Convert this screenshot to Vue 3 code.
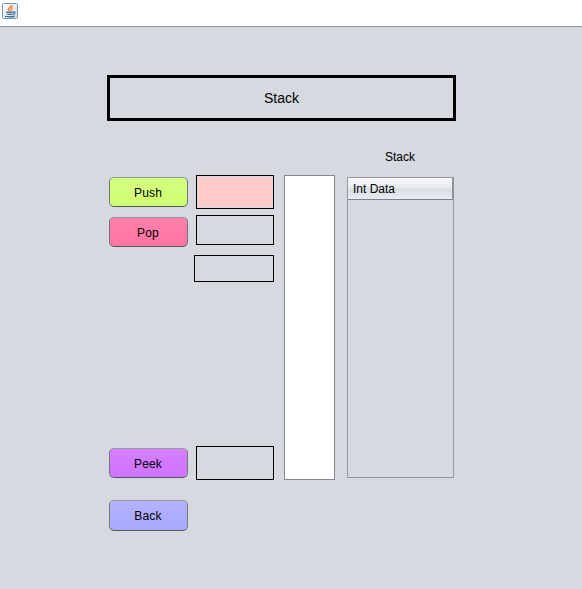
<script setup>
</script>

<template>
  <div class="window">
    <header class="titlebar">
      <svg class="app-icon" width="16" height="16" viewBox="0 0 16 16">
        <defs>
          <linearGradient id="tile" x1="0" y1="0" x2="1" y2="1">
            <stop offset="0" stop-color="#ffffff" />
            <stop offset="1" stop-color="#d3dde6" />
          </linearGradient>
        </defs>
        <rect x=".5" y=".5" width="15" height="15" rx="1" fill="url(#tile)" stroke="#7896ab" />
        <path d="M9.6 2C9.8 4 6 4.8 6.5 6.6C6.8 7.4 7.8 7.6 7.9 8.6" fill="none" stroke="#ee8536" stroke-width="1.8" />
        <path d="M11 4.6C9.2 5.3 8.6 6 9.2 6.8C9.6 7.4 9.4 7.8 8.8 8.4" fill="none" stroke="#ee8536" stroke-width="1.2" />
        <path d="M4 9.4H11.2M5 11.4H10.6M3 13.4Q7.5 14.2 12.8 13.2" fill="none" stroke="#3f74a0" stroke-width="1.4" />
        <path d="M11 8.9C14 8.4 13.5 11 11 11.4" fill="none" stroke="#3f74a0" stroke-width="1.2" />
      </svg>
    </header>
    <main class="content">
      <h1 class="heading">Stack</h1>
      <div class="panel">
        <div class="buttons">
          <button class="btn push">Push</button>
          <button class="btn pop">Pop</button>
          <button class="btn peek">Peek</button>
          <button class="btn back">Back</button>
        </div>
        <div class="fields">
          <div class="field input"></div>
          <div class="field popped"></div>
          <div class="field status"></div>
          <div class="field peeked"></div>
        </div>
        <div class="list"></div>
        <section class="table-area">
          <div class="label">Stack</div>
          <div class="table">
            <div class="table-head">Int Data</div>
          </div>
        </section>
      </div>
    </main>
  </div>
</template>

<style>
body {
  background: #d6d9df;
}
</style>

<style scoped>
.window {
  box-sizing: border-box;
  height: 589px;
  background: #d6d9df;
  color: #000;
  font: 12px/14px "Liberation Sans", Arial, sans-serif;
}
.window * {
  box-sizing: border-box;
}
.titlebar {
  height: 27px;
  padding: 3px 2px;
  background: #fff;
  border-bottom: 1px solid #8f939e;
}
.app-icon {
  display: block;
}
.content {
  padding: 48px 0 0 107px;
}
.heading {
  width: 349px;
  height: 46px;
  margin: 0;
  border: 3px solid #000;
  font-size: 14px;
  font-weight: normal;
  line-height: 40px;
  text-align: center;
}
.panel {
  display: flex;
  align-items: flex-start;
  padding-top: 28px;
}
.buttons {
  display: flex;
  flex-direction: column;
  width: 79px;
  margin: 28px 6px 0 2px;
}
.btn {
  height: 30px;
  padding: 2px 1px 0 0;
  border: 1px solid;
  border-color: #93979f #72757d #53565c;
  border-radius: 5px;
  color: #000;
  font: inherit;
  letter-spacing: 0.2px;
  text-align: center;
}
.push {
  background: linear-gradient(#d5ff80, #cfff73);
}
.pop {
  margin-top: 10px;
  background: linear-gradient(#ff80ab, #ff73a2);
}
.peek {
  margin-top: 201px;
  background: linear-gradient(#d580ff, #cf73ff);
}
.back {
  height: 31px;
  margin-top: 22px;
  padding-top: 0;
  background: linear-gradient(#b3b3ff, #a8a8ff);
}
.fields {
  display: flex;
  flex-direction: column;
  align-items: flex-end;
  width: 80px;
  margin: 26px 10px 0 0;
}
.field {
  width: 78px;
  border: 1px solid #000;
}
.input {
  height: 34px;
  padding: 1px;
  background: #ffcccc content-box;
}
.popped {
  height: 30px;
  margin-top: 6px;
}
.status {
  width: 80px;
  height: 27px;
  margin-top: 10px;
}
.peeked {
  height: 34px;
  margin-top: 164px;
}
.list {
  width: 51px;
  height: 305px;
  margin: 26px 12px 0 0;
  border: 1px solid #85888f;
  background: #fff;
}
.table-area {
  width: 107px;
}
.label {
  height: 28px;
  padding: 1px 1px 0 0;
  text-align: center;
}
.table {
  height: 301px;
  border: 1px solid #9297a1;
}
.table-head {
  height: 22px;
  padding-left: 5px;
  border-right: 1px solid #888c97;
  border-bottom: 1px solid #7d818c;
  background: linear-gradient(#fafafb 0%, #e5e7ea 48%, #d9dce1 52%, #e8ebf2 100%);
  line-height: 23px;
}
</style>
